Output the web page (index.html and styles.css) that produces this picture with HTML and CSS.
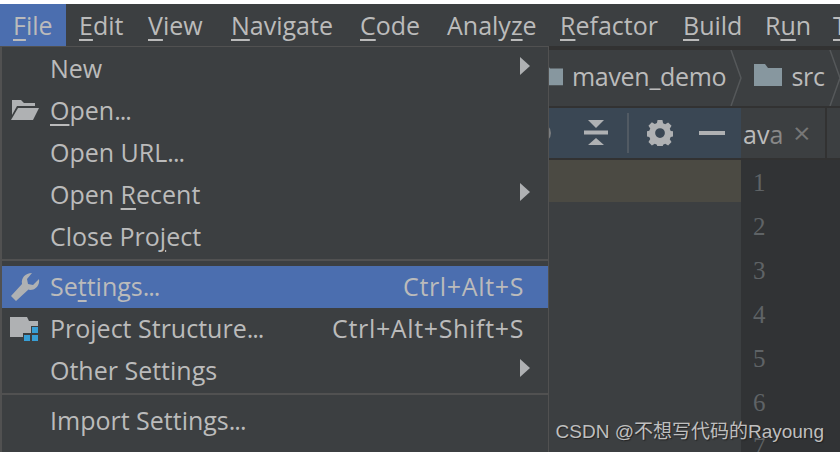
FILE: index.html

```html
<!DOCTYPE html>
<html lang="en">
<head>
  <meta charset="UTF-8" />
  <title>File menu</title>
  <link rel="stylesheet" href="styles.css">
</head>
<body>

  <div class="ide">
    <nav class="menubar">
      <span class="menu-title active"><u>F</u>ile</span>
      <span class="menu-title"><u>E</u>dit</span>
      <span class="menu-title"><u>V</u>iew</span>
      <span class="menu-title"><u>N</u>avigate</span>
      <span class="menu-title"><u>C</u>ode</span>
      <span class="menu-title">Analy<u>z</u>e</span>
      <span class="menu-title"><u>R</u>efactor</span>
      <span class="menu-title"><u>B</u>uild</span>
      <span class="menu-title">R<u>u</u>n</span>
      <span class="menu-title"><u>T</u>ools</span>
    </nav>

    <div class="workspace">
      <div class="breadcrumbs">
        <svg class="crumb-folder" width="26" height="22" viewBox="0 0 28 22"><path d="M0 0h11l3 4h14v18H0z"/></svg>
        <span class="crumb">maven_demo</span>
        <svg class="crumb-sep" width="12" height="56" viewBox="0 0 12 56"><path d="M1 0l10 28L1 56"/></svg>
        <svg class="crumb-folder" width="28" height="22" viewBox="0 0 28 22"><path d="M0 0h11l3 4h14v18H0z"/></svg>
        <span class="crumb">src</span>
        <svg class="crumb-sep" width="12" height="56" viewBox="0 0 12 56"><path d="M1 0l10 28L1 56"/></svg>
      </div>

      <div class="panes">
        <div class="project-pane">
          <div class="pane-toolbar">
            <svg class="tool-icon tool-dim" width="26" height="26" viewBox="0 0 26 26"><circle cx="13" cy="13" r="10"/></svg>
            <svg class="tool-icon" width="26" height="26" viewBox="0 0 26 26"><path d="M5 0h16l-8 8zM1 10.500h24v4H1zM13 18l8 7H5z"/></svg>
            <span class="tool-divider"></span>
            <svg class="tool-icon" width="26" height="26" viewBox="0 0 16 16"><path d="M6.500 0h3l.4 2 1.300.6 1.800-1.100 2.100 2.100-1.100 1.800.6 1.300 2 .4v3l-2 .4-.6 1.300 1.100 1.800-2.100 2.100-1.800-1.100-1.300.6-.4 2h-3l-.4-2-1.300-.6-1.800 1.100L.9 13.500 2 11.700l-.6-1.300-2-.4v-3l2-.4.6-1.300L.9 3.500 3 1.400l1.800 1.100 1.300-.6zM8 5a3 3 0 1 0 0 6 3 3 0 0 0 0-6z" fill-rule="evenodd"/></svg>
            <span class="tool-minus"></span>
          </div>
          <div class="pane-row"></div>
        </div>

        <div class="editor">
          <div class="tabs">
            <span class="tab">av<span class="tab-fade">a</span><span class="tab-close">×</span></span>
            <span class="tab-rest"></span>
          </div>
          <div class="gutter">
            <span>1</span><span>2</span><span>3</span><span>4</span><span>5</span><span>6</span><span>7</span>
          </div>
        </div>
      </div>
    </div>

    <div class="file-menu">
      <div class="item"><span class="label">New</span><span class="arrow"></span></div>
      <div class="item">
        <svg class="item-icon" width="30" height="22" viewBox="0 0 30 22"><path d="M2 1h9l3 3h11v3H7L2 16z"/><path d="M8 9h21l-6 12H1z"/></svg>
        <span class="label"><u>O</u>pen<span class="dots">...</span></span>
      </div>
      <div class="item"><span class="label">Open URL<span class="dots">...</span></span></div>
      <div class="item"><span class="label">Open <u>R</u>ecent</span><span class="arrow"></span></div>
      <div class="item"><span class="label">Close Pro<u>j</u>ect</span></div>
      <div class="separator"></div>
      <div class="item selected">
        <svg class="item-icon" width="30" height="28" viewBox="-1 0 30 28"><path d="M21 0L16 6l1 5 5 1 6-6c1 6-3 11-9 11l-1.500-.5L5 28l-5-5 11-12C10 5 14 0 21 0z"/></svg>
        <span class="label">Se<u>t</u>tings<span class="dots">...</span></span><span class="shortcut">Ctrl+Alt+S</span>
      </div>
      <div class="item">
        <svg class="item-icon" width="28" height="24" viewBox="0 0 28 24"><path d="M0 0h17l2 4h9v5h-7v7h-8v4H0z"/><path class="blue" d="M22 10h6v6h-6zM14 18h6v6h-6zM22 18h6v6h-6z"/></svg>
        <span class="label">Project Structure<span class="dots">...</span></span><span class="shortcut">Ctrl+Alt+Shift+S</span>
      </div>
      <div class="item"><span class="label">Other Settings</span><span class="arrow"></span></div>
      <div class="separator second"></div>
      <div class="item"><span class="label">Import Settings<span class="dots">...</span></span></div>
    </div>

    <div class="watermark">CSDN @不想写代码的Rayoung</div>
  </div>

</body>
</html>
```

FILE: styles.css

```css
html, body {
  margin: 0;
  height: 100%;
  overflow: hidden;
  background: #fff;
}
.ide {
  position: relative;
  width: 840px;
  height: 448px;
  margin-top: 4px;
  overflow: hidden;
  background: #3c3f41;
  color: #bbbbbb;
  font-family: "Open Sans", sans-serif;
  font-size: 25px;
}
u {
  text-underline-offset: 4px;
  text-decoration-thickness: 2px;
}

/* menu bar */
.menubar {
  display: grid;
  grid-template-columns: 66px 69px 83px 129px 87px 113px 123px 82px 68px auto;
  height: 42px;
  white-space: nowrap;
}
.menu-title {
  padding-left: 13px;
  line-height: 42px;
}
.menu-title.active {
  background: #4b6eaf;
}

/* stuff behind the menu */
.workspace {
  border-top: 4px solid #323232;
}
.breadcrumbs {
  display: flex;
  align-items: center;
  height: 56px;
  padding-left: 537px;
  white-space: nowrap;
}
.crumb {
  padding-bottom: 4px;
  letter-spacing: -.3px;
}
.crumb-folder {
  fill: #87979f;
  flex: none;
  margin: 0 9px 6px 0;
}
.crumb-sep {
  fill: none;
  stroke: #55585a;
  stroke-width: 1.500;
  flex: none;
  margin: 0 12px 0 4px;
}
.panes {
  display: flex;
  border-top: 2px solid #323232;
}
.project-pane {
  width: 741px;
  height: 340px;
  flex: none;
}
.pane-toolbar {
  display: flex;
  align-items: center;
  justify-content: flex-end;
  height: 50px;
  padding-right: 16px;
  gap: 18px;
  background: #3a4754;
  border-bottom: 2px solid #323232;
}
.tool-icon {
  fill: #afb1b3;
  flex: none;
}
.tool-dim {
  fill: #7b7e80;
  margin-right: 11px;
}
.tool-divider {
  width: 2px;
  height: 40px;
  background: #515a63;
}
.tool-minus {
  width: 26px;
  height: 4px;
  background: #afb1b3;
  margin-left: 8px;
}
.pane-row {
  height: 42px;
  background: #4b4a43;
}
.editor {
  flex: 1;
  background: #313335;
  font-family: "Liberation Serif", serif;
}
.tabs {
  display: flex;
  height: 50px;
  background: #3c3f41;
  border-bottom: 2px solid #323232;
  font-family: "Open Sans", sans-serif;
  line-height: 50px;
}
.tab {
  width: 82px;
  padding-left: 2px;
  border-right: 2px solid #323232;
  white-space: nowrap;
  color: #bbbbbb;
}
.tab-fade {
  color: #888;
}
.tab-close {
  color: #777;
  margin-left: 10px;
  font-size: 30px;
}
.gutter {
  display: flex;
  flex-direction: column;
  padding-left: 12px;
  color: #5f6366;
  font-size: 25px;
  line-height: 44px;
  padding-top: 1px;
}

/* file dropdown */
.file-menu {
  position: absolute;
  left: 0;
  top: 42px;
  box-sizing: border-box;
  width: 549px;
  height: 406px;
  background: #3c3f41;
  border: 1px solid #515151;
  border-left-width: 2px;
  border-bottom: 0;
}
.item {
  position: relative;
  box-sizing: border-box;
  display: flex;
  align-items: center;
  height: 42px;
  padding: 0 24px 0 48px;
  white-space: nowrap;
}
.selected, .selected ~ .item {
  padding-bottom: 2px;
}
.item.selected {
  background: #4b6eaf;
}
.label {
  flex: 1;
}
.dots {
  letter-spacing: -1px;
}
.shortcut {
  letter-spacing: .65px;
}
.item-icon {
  position: absolute;
  left: 8px;
  top: 50%;
  transform: translateY(-50%);
  fill: #afb1b3;
}
.item-icon .blue {
  fill: #389fd6;
}
.arrow {
  width: 0;
  height: 0;
  border-left: 10px solid #afb1b3;
  border-top: 9px solid transparent;
  border-bottom: 9px solid transparent;
  margin: -4px -6px 0 0;
}
.separator {
  height: 2px;
  margin: 2px 0 5px;
  background: #515151;
}
.separator.second {
  margin-top: 1px;
}

/* csdn stamp */
.watermark {
  position: absolute;
  right: 16px;
  bottom: 9px;
  font-family: "Liberation Sans", "Noto Sans CJK SC", sans-serif;
  font-size: 19px;
  color: #bfbfbf;
  text-shadow: 1px 1px 1px #222;
  white-space: nowrap;
}
```
